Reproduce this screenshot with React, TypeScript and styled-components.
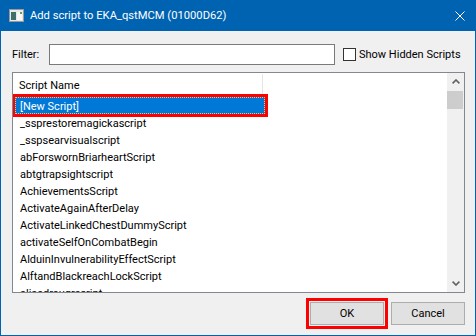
import React from 'react';
import styled, { createGlobalStyle } from 'styled-components';

const GlobalStyle = createGlobalStyle`
  html, body {
    margin: 0;
    padding: 0;
    background: #f0f0f0;
  }
`;

const Window = styled.div`
  width: 476px;
  height: 336px;
  box-sizing: border-box;
  border: 1px solid #0063b1;
  border-top: none;
  display: flex;
  flex-direction: column;
  background: #f0f0f0;
  font-family: Roboto, "Noto Sans", sans-serif;
  font-size: 11px;
  color: #000;
`;

const TitleBar = styled.div`
  height: 31px;
  flex: none;
  background: #0063b1;
  color: #fff;
  display: flex;
  align-items: center;
  padding-left: 8px;
  padding-right: 10px;
`;

const TitleText = styled.span`
  margin-left: 6px;
  font-size: 11.2px;
  white-space: nowrap;
`;

const CloseIcon = styled.svg`
  margin-left: auto;
  display: block;
  flex: none;
`;

const Body = styled.div`
  flex: 1;
  display: flex;
  flex-direction: column;
  padding: 13px 10px 10px 11px;
`;

const FilterRow = styled.div`
  display: flex;
  align-items: center;
  height: 21px;
`;

const FilterLabel = styled.label`
  width: 37px;
  flex: none;
`;

const FilterInput = styled.div`
  width: 286px;
  height: 21px;
  flex: none;
  box-sizing: border-box;
  border: 1px solid #7a7a7a;
  background: #fff;
`;

const CheckBox = styled.div`
  width: 13px;
  height: 13px;
  flex: none;
  box-sizing: border-box;
  border: 1px solid #333;
  background: #fff;
  margin-left: 8px;
`;

const CheckLabel = styled.span`
  margin-left: 3px;
  white-space: nowrap;
`;

const ListBox = styled.div`
  margin-top: 7px;
  width: 453px;
  height: 221px;
  box-sizing: border-box;
  border: 1px solid #828790;
  background: #fff;
  display: flex;
`;

const ListMain = styled.div`
  flex: 1;
  overflow: hidden;
  display: flex;
  flex-direction: column;
`;

const Header = styled.div`
  height: 24px;
  flex: none;
  display: flex;
  align-items: flex-start;
`;

const HeaderCell = styled.div`
  width: 250px;
  height: 20px;
  margin-top: 1px;
  box-sizing: border-box;
  padding-left: 6px;
  padding-top: 5px;
  border-right: 1px solid #e5e5e5;
  white-space: nowrap;
`;

const Row = styled.div<{ $selected?: boolean }>`
  flex: none;
  width: 250px;
  height: 17px;
  margin-left: 2px;
  box-sizing: border-box;
  padding-left: 4px;
  padding-top: 1px;
  display: flex;
  align-items: center;
  white-space: nowrap;
  border: 1px solid transparent;
  ${p =>
    p.$selected &&
    `
    background: #0078d7;
    color: #fff;
    border: 1px dotted #f2c46a;
    outline: 3px solid #ff0000;
    outline-offset: 0;
  `}
`;

const ScrollBar = styled.div`
  width: 17px;
  flex: none;
  background: #f0f0f0;
  display: flex;
  flex-direction: column;
`;

const ScrollArrow = styled.div`
  height: 17px;
  flex: none;
  display: flex;
  align-items: center;
  justify-content: center;
`;

const Thumb = styled.div`
  height: 18px;
  margin: 1px 1px 0 0;
  background: #cdcdcd;
`;

const Spacer = styled.div`
  flex: 1;
`;

const ButtonRow = styled.div`
  margin-top: 9px;
  display: flex;
  justify-content: flex-end;
  gap: 7px;
`;

const Button = styled.button<{ $marked?: boolean }>`
  width: 74px;
  height: 23px;
  box-sizing: border-box;
  border: 1px solid #adadad;
  background: #e1e1e1;
  font-family: inherit;
  font-size: 11px;
  color: #000;
  padding: 0;
  ${p => p.$marked && 'outline: 3px solid #ff0000; outline-offset: 1px;'}
`;

const scripts = [
  '_ssprestoremagickascript',
  '_sspsearvisualscript',
  'abForswornBriarheartScript',
  'abtgtrapsightscript',
  'AchievementsScript',
  'ActivateAgainAfterDelay',
  'ActivateLinkedChestDummyScript',
  'activateSelfOnCombatBegin',
  'AlduinInvulnerabilityEffectScript',
  'AlftandBlackreachLockScript',
  'aliasdraugrscript',
];

const WindowIcon = () => (
  <svg width="15" height="13" viewBox="0 0 15 13" style={{ flex: 'none' }}>
    <rect x="0.5" y="0.5" width="14" height="12" fill="#e8e8e8" stroke="#9a9a9a" />
    <rect x="2" y="3" width="5" height="8" fill="#3f6f68" />
    <rect x="8" y="3" width="5" height="8" fill="#f7f7f7" />
    <rect x="11" y="3" width="2" height="2" fill="#5aa060" />
  </svg>
);

const Chevron = ({ down }: { down?: boolean }) => (
  <svg width="8" height="5" viewBox="0 0 8 5">
    <path
      d={down ? 'M0.6 0.6 L4 4 L7.4 0.6' : 'M0.6 4.4 L4 1 L7.4 4.4'}
      fill="none"
      stroke="#606060"
      strokeWidth="1.6"
    />
  </svg>
);

export default function App() {
  return (
    <>
      <GlobalStyle />
      <Window>
        <TitleBar>
          <WindowIcon />
          <TitleText>Add script to EKA_qstMCM (01000D62)</TitleText>
          <CloseIcon width="10" height="10" viewBox="0 0 10 10">
            <path d="M0.5 0.5 L9.5 9.5 M9.5 0.5 L0.5 9.5" stroke="#fff" strokeWidth="1" />
          </CloseIcon>
        </TitleBar>
        <Body>
          <FilterRow>
            <FilterLabel>Filter:</FilterLabel>
            <FilterInput />
            <CheckBox />
            <CheckLabel>Show Hidden Scripts</CheckLabel>
          </FilterRow>
          <ListBox>
            <ListMain>
              <Header>
                <HeaderCell>Script Name</HeaderCell>
              </Header>
              <Row $selected>[New Script]</Row>
              {scripts.map(s => (
                <Row key={s}>{s}</Row>
              ))}
            </ListMain>
            <ScrollBar>
              <ScrollArrow>
                <Chevron />
              </ScrollArrow>
              <Thumb />
              <Spacer />
              <ScrollArrow>
                <Chevron down />
              </ScrollArrow>
            </ScrollBar>
          </ListBox>
          <ButtonRow>
            <Button $marked>OK</Button>
            <Button>Cancel</Button>
          </ButtonRow>
        </Body>
      </Window>
    </>
  );
}
